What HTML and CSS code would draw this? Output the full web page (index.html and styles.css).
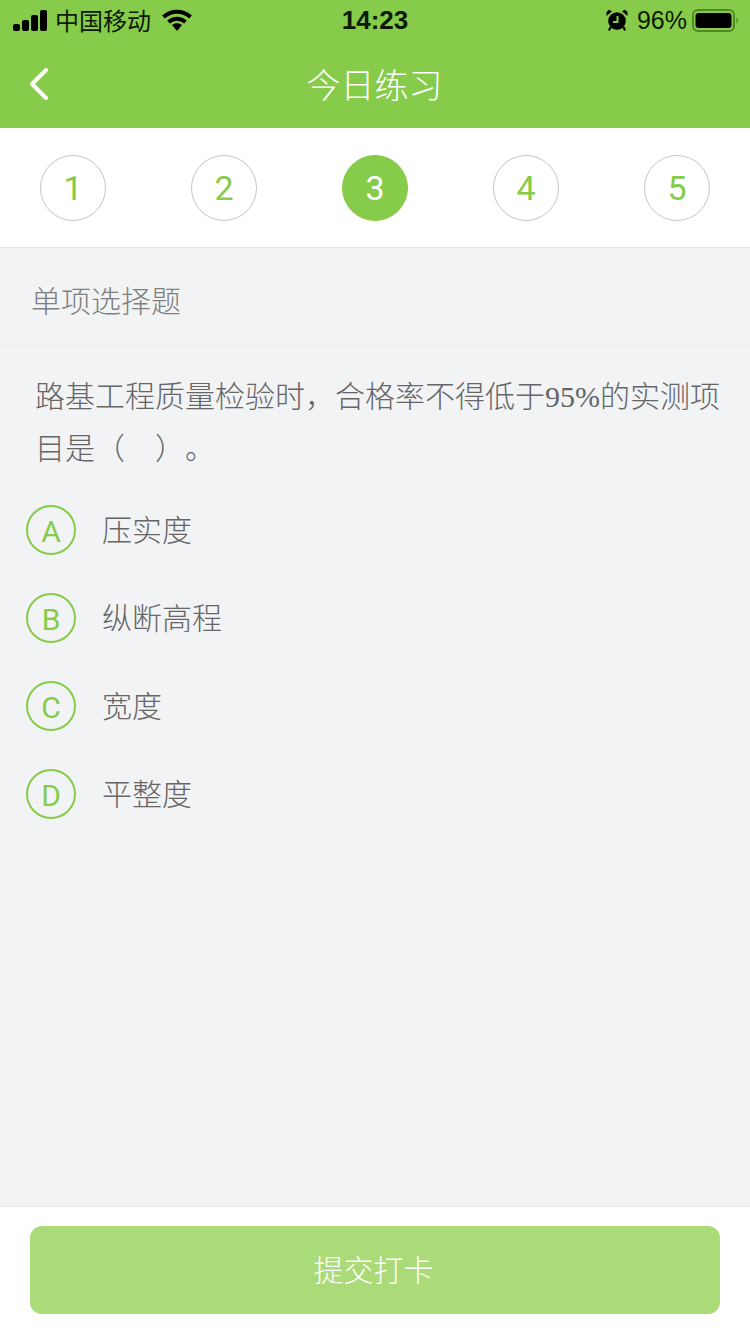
FILE: index.html
```html
<!DOCTYPE html>
<html lang="zh-CN">
  <head>
    <meta charset="UTF-8" />
    <meta name="viewport" content="width=device-width, initial-scale=1.0" />
    <title>今日练习</title>
    <link rel="stylesheet" href="styles.css">
  </head>
  <body>
    <div class="app">
      <header class="header">
        <div class="status-bar">
          <div class="status-left">
            <svg class="signal" width="34" height="21" viewBox="0 0 34 21">
              <rect x="0" y="14" width="7" height="7" rx="2" />
              <rect x="9" y="10" width="7" height="11" rx="2" />
              <rect x="18" y="5" width="7" height="16" rx="2" />
              <rect x="27" y="0" width="7" height="21" rx="2" />
            </svg>
            <span class="carrier">中国移动</span>
            <svg class="wifi" width="30" height="22" viewBox="0 0 30 22">
              <path d="M1.5 8C9 1 21 1 28.5 8" />
              <path d="M6.5 13C11.5 8.5 18.5 8.5 23.5 13" />
              <path class="wifi-dot" d="M10 16C13 13.6 17 13.6 20 16L15 22Z" />
            </svg>
          </div>
          <span class="time">14:23</span>
          <div class="status-right">
            <svg class="alarm" width="22" height="22" viewBox="0 0 22 22">
              <circle cx="11" cy="12" r="8.8" />
              <path d="M0.5 7 6 2.2 3 0.8 0.5 3Z" />
              <path d="M21.5 7 16 2.2 19 0.8 21.5 3Z" />
              <path d="M4.5 18 3 21.5M17.5 18 19 21.5" class="alarm-leg" />
              <path d="M11.5 7V13H7" class="alarm-hand" />
            </svg>
            <span class="battery-text">96%</span>
            <svg class="battery" width="48" height="23" viewBox="0 0 48 23">
              <rect class="battery-shell" x="1" y="1" width="41" height="21" rx="5" />
              <rect x="3.5" y="4" width="36" height="15" rx="3" />
              <path class="battery-tip" d="M44.5 8.5C46.5 9 46.5 14 44.5 14.5Z" />
            </svg>
          </div>
        </div>
        <div class="nav-bar">
          <svg class="back" width="20" height="34" viewBox="0 0 20 34">
            <path d="M17 3 3 17 17 31" />
          </svg>
          <h1 class="nav-title">今日练习</h1>
        </div>
      </header>

      <div class="steps">
        <div class="step">1</div>
        <div class="step">2</div>
        <div class="step step-active">3</div>
        <div class="step">4</div>
        <div class="step">5</div>
      </div>

      <main class="content">
        <div class="question-type">单项选择题</div>
        <p class="question">路基工程质量检验时，合格率不得低于<span class="num">95%</span>的实测项<br>目是（&emsp;）。</p>
        <ul class="options">
          <li class="option"><span class="option-key">A</span><span class="option-text">压实度</span></li>
          <li class="option"><span class="option-key">B</span><span class="option-text">纵断高程</span></li>
          <li class="option"><span class="option-key">C</span><span class="option-text">宽度</span></li>
          <li class="option"><span class="option-key">D</span><span class="option-text">平整度</span></li>
        </ul>
      </main>

      <footer class="footer">
        <button class="submit">提交打卡</button>
      </footer>
    </div>
  </body>
</html>
```

FILE: styles.css
```css
* {
  box-sizing: border-box;
}
body {
  margin: 0;
  font-family: "Noto Sans CJK SC", "Liberation Sans", sans-serif;
  font-weight: 300;
  background-color: #f2f3f5;
  color: #666;
}
.app {
  display: flex;
  flex-direction: column;
  height: 1334px;
  overflow: hidden;
}
.header {
  background-color: #86cc4a;
  height: 128px;
  flex: none;
}
.status-bar {
  display: grid;
  grid-template-columns: 1fr auto 1fr;
  align-items: center;
  height: 40px;
  padding: 0 10px 0 13px;
  color: #0c1a02;
  font-size: 24px;
}
.status-left,
.status-right {
  display: flex;
  align-items: center;
}
.status-right {
  justify-content: flex-end;
}
.signal {
  fill: #000;
  margin-right: 8px;
}
.carrier {
  font-weight: 400;
  line-height: 38px;
}
.wifi {
  margin-left: 11px;
}
.wifi path {
  fill: none;
  stroke: #000;
  stroke-width: 4;
}
.wifi .wifi-dot {
  fill: #000;
  stroke: none;
}
.time {
  margin-right: 3px;
  font-family: "Liberation Sans", sans-serif;
  font-size: 26px;
  font-weight: bold;
}
.alarm {
  fill: #000;
  margin-right: 9px;
}
.alarm-leg,
.alarm-hand {
  fill: none;
  stroke-width: 2;
}
.alarm-leg {
  stroke: #000;
}
.alarm-hand {
  stroke: #86cc4a;
}
.battery-text {
  font-family: "Liberation Sans", sans-serif;
  font-size: 25px;
  font-weight: normal;
  margin-right: 5px;
}
.battery-shell {
  fill: none;
  stroke: #4f8a26;
  stroke-width: 2;
}
.battery-tip {
  fill: #4f8a26;
}
.nav-bar {
  position: relative;
  display: flex;
  align-items: center;
  justify-content: center;
  height: 88px;
}
.back {
  position: absolute;
  left: 29px;
  top: 27px;
  fill: none;
  stroke: #fff;
  stroke-width: 4;
  stroke-linecap: round;
  stroke-linejoin: round;
}
.nav-title {
  margin: 0 1px 0 0;
  color: #fff;
  font-size: 34px;
  font-weight: 300;
  line-height: 86px;
}
.steps {
  display: flex;
  justify-content: space-between;
  flex: none;
  height: 120px;
  padding: 27px 40px 0;
  background-color: #fff;
  border-bottom: 1px solid #e6e7e9;
}
.step {
  display: flex;
  align-items: center;
  justify-content: center;
  width: 66px;
  height: 66px;
  border: 1px solid #c4c4c4;
  border-radius: 50%;
  color: #86cc4a;
  font-family: Roboto, "Liberation Sans", sans-serif;
  font-size: 34px;
  font-weight: 400;
}
.step-active {
  background-color: #86cc4a;
  border-color: #86cc4a;
  color: #fff;
}
.content {
  flex: 1;
}
.question-type {
  height: 98px;
  padding-left: 31px;
  border-bottom: 1px solid #ebecee;
  color: #808080;
  font-size: 30px;
  line-height: 103px;
}
.question {
  margin: 0;
  padding: 22px 30px 0 35px;
  font-size: 30px;
  line-height: 52px;
  text-spacing-trim: space-all;
}
.num {
  font-family: "Liberation Serif", serif;
  font-weight: 400;
  line-height: 1;
}
.options {
  margin: 14px 0 0;
  padding: 0;
  list-style: none;
}
.option {
  display: flex;
  align-items: center;
  gap: 26px;
  height: 88px;
  padding-left: 26px;
  font-size: 30px;
}
.option-text {
  padding-bottom: 4px;
}
.option-key {
  display: flex;
  align-items: center;
  justify-content: center;
  width: 50px;
  height: 50px;
  padding-top: 2px;
  border: 2px solid #86cc4a;
  border-radius: 50%;
  color: #86cc4a;
  font-family: Roboto, "Liberation Sans", sans-serif;
  font-size: 30px;
  font-weight: 400;
}
.footer {
  flex: none;
  height: 128px;
  padding: 19px 30px 0;
  background-color: #fff;
  border-top: 1px solid #e6e7e9;
}
.submit {
  display: block;
  width: 100%;
  height: 88px;
  padding: 0 3px 4px 0;
  border: none;
  border-radius: 12px;
  background-color: #aadb78;
  color: #fff;
  font-family: inherit;
  font-size: 30px;
  font-weight: 300;
}
```
